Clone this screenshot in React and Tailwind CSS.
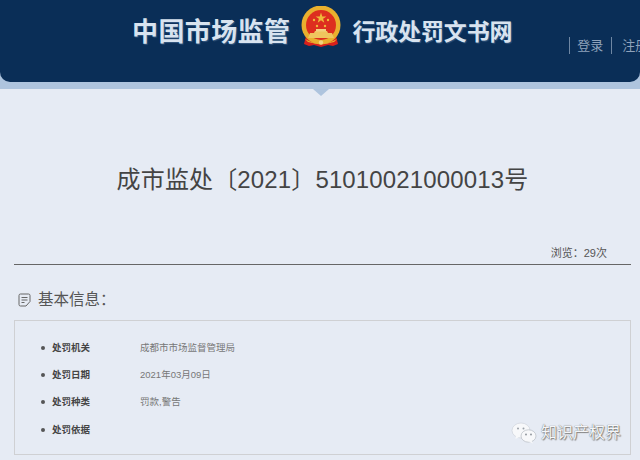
const FONT = { fontFamily: '"Liberation Sans","Noto Sans CJK SC",sans-serif' };

function Emblem() {
  return (
    <svg width="40" height="42" viewBox="0 0 40 42" className="shrink-0">
      <path d="M5 30 L3 38 L8 40 L13 39 L20 41 L27 39 L32 40 L37 38 L35 30 Z" fill="#d9201c" />
      <circle cx="20" cy="19" r="19.5" fill="#e9b02e" />
      <circle cx="20" cy="19" r="15" fill="#dd2e1f" />
      <polygon points="20,6.5 21.3,10.4 25.4,10.4 22.1,12.8 23.3,16.7 20,14.3 16.7,16.7 17.9,12.8 14.6,10.4 18.7,10.4" fill="#eeb93a" />
      <circle cx="13" cy="14" r="1.2" fill="#eeb93a" />
      <circle cx="16" cy="20" r="1.2" fill="#eeb93a" />
      <circle cx="24" cy="20" r="1.2" fill="#eeb93a" />
      <circle cx="27" cy="14" r="1.2" fill="#eeb93a" />
      <path d="M14 25 L26 25 L27 27 L31 27 L33 32 L7 32 L9 27 L13 27 Z" fill="#efc65e" />
      <rect x="15" y="23" width="10" height="2.5" fill="#f2d27e" />
      <path d="M4 33 Q20 42 36 33 L33 36 Q20 40 7 36 Z" fill="#e9b02e" />
      <circle cx="20" cy="36.5" r="2.2" fill="#f2d27e" />
    </svg>
  );
}

function DocIcon() {
  return (
    <svg width="13" height="14" viewBox="0 0 13 14" fill="none" stroke="#666" strokeWidth="1" className="shrink-0">
      <path d="M2.5 1 H10.5 Q12 1 12 2.5 V8.5 L8 13 H2.5 Q1 13 1 11.5 V2.5 Q1 1 2.5 1 Z" />
      <path d="M3.5 4.5 H9.5 M3.5 7 H9.5 M3.5 9.5 H6.5" />
    </svg>
  );
}

function WeChat() {
  return (
    <svg width="26" height="22" viewBox="0 0 26 22">
      <ellipse cx="10" cy="8.5" rx="9" ry="7.5" fill="#f7f8fa" stroke="#c9ced6" strokeWidth="0.6" />
      <path d="M5 13 L4.5 17 L9 14.5 Z" fill="#f7f8fa" />
      <ellipse cx="17.5" cy="14" rx="7.5" ry="6.2" fill="#f7f8fa" stroke="#b5bac2" strokeWidth="0.7" />
      <path d="M20.5 18.5 L22 21.5 L17.5 19.8 Z" fill="#f7f8fa" />
      <circle cx="7" cy="6.5" r="1" fill="#9aa0a8" />
      <circle cx="12.5" cy="6.5" r="1" fill="#9aa0a8" />
      <circle cx="15" cy="12.5" r="0.9" fill="#8a9098" />
      <circle cx="20" cy="12.5" r="0.9" fill="#8a9098" />
    </svg>
  );
}

const rows = [
  ["处罚机关", "成都市市场监督管理局"],
  ["处罚日期", "2021年03月09日"],
  ["处罚种类", "罚款,警告"],
  ["处罚依据", ""],
];

export default function App() {
  return (
    <div className="relative w-[640px] h-[460px] overflow-hidden bg-[#e6ebf4]" style={FONT}>
      <header className="relative h-[89px] bg-[#aec4de]">
        <div className="h-[82px] bg-[#0a2e57] rounded-b-[10px] flex items-start pl-[132px] overflow-hidden">
          <span className="mt-[13px] text-[26px] leading-[38px] tracking-[0.4px] font-bold text-[#d8e3ef] whitespace-nowrap [text-shadow:1px_1px_1px_#34577f]">中国市场监管</span>
          <div className="ml-[11px] mt-[6px]"><Emblem /></div>
          <span className="ml-[11px] mt-[13px] text-[23px] leading-[38px] tracking-[-0.15px] font-bold text-[#d8e3ef] whitespace-nowrap [text-shadow:1px_1px_1px_#34577f]">行政处罚文书网</span>
          <div className="ml-[57px] mt-[36px] flex items-center text-[13px] leading-[17px] text-[#8fa3bb] whitespace-nowrap">
            <span className="w-px h-[17px] bg-[#6f87a3]" />
            <span className="ml-[7px] w-[28px] pt-[1px]">登录</span>
            <span className="ml-[6px] w-px h-[17px] bg-[#6f87a3]" />
            <span className="ml-[10px] pt-[1px]">注册</span>
          </div>
        </div>
        <div className="absolute left-[313px] top-[89px] w-0 h-0 border-l-[8px] border-r-[8px] border-t-[7px] border-l-transparent border-r-transparent border-t-[#aec4de]" />
      </header>

      <h1 className="mt-[73px] pl-[5px] text-center text-[24px] leading-[36px] tracking-[0.14px] font-normal text-[#444] whitespace-nowrap">成市监处〔2021〕51010021000013号</h1>

      <div className="mt-[46px] ml-[14px] w-[617px] h-[21px] border-b border-[#666] flex justify-end pr-[24px] pt-[1px] text-[11px] leading-[16px] text-[#555]">
        浏览：29次
      </div>

      <div className="ml-[18px] mt-[25px] flex items-center gap-[7px] h-[20px]">
        <DocIcon />
        <span className="text-[15.5px] leading-[20px] text-[#555]">基本信息：</span>
      </div>

      <div className="ml-[14px] mt-[10px] w-[617px] h-[135px] border border-[#cfd0d3] pl-[26px] pt-[13px]">
        <ul>
          {rows.map(([k, v]) => (
            <li key={k} className="flex items-center h-[27.3px] text-[9.5px] leading-[14px]">
              <span className="w-[4px] h-[4px] rounded-full bg-[#555] shrink-0" />
              <span className="ml-[7px] w-[88px] font-bold text-[#444]">{k}</span>
              <span className="text-[#777]">{v}</span>
            </li>
          ))}
        </ul>
      </div>

      <div className="absolute left-[511px] top-[422px] flex items-center gap-[4px]">
        <WeChat />
        <span className="text-[16px] leading-[22px] text-[#f5f6f8] whitespace-nowrap [text-shadow:0_0_1px_#555,1px_1px_1px_#888]">知识产权界</span>
      </div>
    </div>
  );
}
